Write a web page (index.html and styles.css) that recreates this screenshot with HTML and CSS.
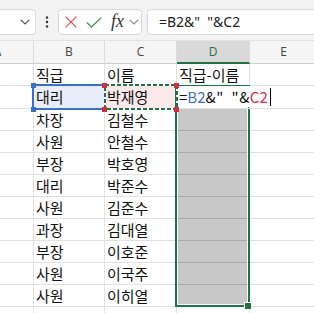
FILE: index.html
```html
<!DOCTYPE html>
<html>
<head>
<meta charset="utf-8">
<link rel="stylesheet" href="styles.css">
</head>
<body>
<div class="toolbar">
  <div class="namebox">
    <svg class="chev" width="10" height="6" viewBox="0 0 10 6"><polyline points="0.8,0.8 5,5 9.2,0.8" fill="none" stroke="#555" stroke-width="1.2"/></svg>
  </div>
  <div class="dots">
    <svg width="4" height="12" viewBox="0 0 4 12"><circle cx="2" cy="1.5" r="1.2" fill="#333"/><circle cx="2" cy="6" r="1.2" fill="#333"/><circle cx="2" cy="10.5" r="1.2" fill="#333"/></svg>
  </div>
  <div class="fxbox">
    <svg class="ico-x" width="12" height="12" viewBox="0 0 12 12"><path d="M0.6 0.6 L11.4 11.4 M11.4 0.6 L0.6 11.4" stroke="#e0525c" stroke-width="1.3" fill="none"/></svg>
    <svg class="ico-ok" width="16" height="11" viewBox="0 0 16 11"><polyline points="0.8,5.4 5.4,10 15.2,0.8" fill="none" stroke="#43a05f" stroke-width="1.4"/></svg>
    <span class="fx">fx</span>
    <svg class="chev2" width="10" height="6" viewBox="0 0 10 6"><polyline points="0.8,0.8 5,5 9.2,0.8" fill="none" stroke="#888" stroke-width="1.2"/></svg>
  </div>
  <div class="formula">=B2&amp;"  "&amp;C2</div>
</div>

<div class="sheetwrap">
  <div class="grid">
    <div class="hd hd-a">A</div><div class="hd">B</div><div class="hd">C</div><div class="hd hd-sel">D</div><div class="hd">E</div><div class="hd"></div>

    <div class="c"></div><div class="c">직급</div><div class="c">이름</div><div class="c">직급-이름</div><div class="c"></div><div class="c"></div>

    <div class="c"></div><div class="c ref-b">대리</div><div class="c ref-c">박재영</div>
    <div class="c edit"><span class="edtext">=<span class="blue">B2</span><span class="mid">&amp;"  "&amp;</span><span class="red">C2</span><span class="caret"></span></span></div>
    <div class="c"></div><div class="c"></div>

    <div class="c"></div><div class="c">차장</div><div class="c">김철수</div><div class="c sel"></div><div class="c"></div><div class="c"></div>
    <div class="c"></div><div class="c">사원</div><div class="c">안철수</div><div class="c sel"></div><div class="c"></div><div class="c"></div>
    <div class="c"></div><div class="c">부장</div><div class="c">박호영</div><div class="c sel"></div><div class="c"></div><div class="c"></div>
    <div class="c"></div><div class="c">대리</div><div class="c">박준수</div><div class="c sel"></div><div class="c"></div><div class="c"></div>
    <div class="c"></div><div class="c">사원</div><div class="c">김준수</div><div class="c sel"></div><div class="c"></div><div class="c"></div>
    <div class="c"></div><div class="c">과장</div><div class="c">김대열</div><div class="c sel"></div><div class="c"></div><div class="c"></div>
    <div class="c"></div><div class="c">부장</div><div class="c">이호준</div><div class="c sel"></div><div class="c"></div><div class="c"></div>
    <div class="c"></div><div class="c">사원</div><div class="c">이국주</div><div class="c sel"></div><div class="c"></div><div class="c"></div>
    <div class="c"></div><div class="c">사원</div><div class="c">이히열</div><div class="c sel"></div><div class="c"></div><div class="c"></div>
    <div class="c"></div><div class="c"></div><div class="c"></div><div class="c"></div><div class="c"></div><div class="c"></div>
  </div>

  <div class="selbox"></div>
  <div class="handle"></div>
  <div class="bbox"></div>
  <svg class="cbox" width="74" height="26" viewBox="0 0 74 26">
    <rect x="1" y="1" width="72" height="24" fill="none" stroke="#ffffff" stroke-width="2"/>
    <rect x="1" y="1" width="72" height="24" fill="none" stroke="#217346" stroke-width="2" stroke-dasharray="4 2"/>
  </svg>
  <div class="sq sq-blue sq-b1"></div>
  <div class="sq sq-blue sq-b2"></div>
  <div class="sq sq-red sq-c1"></div>
  <div class="sq sq-red sq-c2"></div>
  <div class="sq sq-red sq-c3"></div>
  <div class="sq sq-red sq-c4"></div>
</div>
</body>
</html>
```

FILE: styles.css
```css
html, body {
  margin: 0;
  padding: 0;
}
body {
  width: 314px;
  height: 313px;
  overflow: hidden;
  background: #ffffff;
  font-family: "Noto Sans CJK KR", "Noto Sans", sans-serif;
}

/* ---------- toolbar ---------- */
.toolbar {
  display: flex;
  align-items: flex-start;
  box-sizing: border-box;
  height: 41px;
  padding-top: 9px;
  background: #f3f3f3;
  border-bottom: 1px solid #e3e3e3;
}
.namebox {
  box-sizing: border-box;
  width: 43px;
  height: 26px;
  margin-left: -7px;
  background: #fff;
  border: 1px solid #d9d9d9;
  border-radius: 4px;
  display: flex;
  align-items: center;
  justify-content: flex-end;
  padding-right: 5px;
}
.dots {
  width: 22px;
  height: 26px;
  display: flex;
  align-items: center;
  justify-content: center;
}
.fxbox {
  box-sizing: border-box;
  width: 84px;
  height: 26px;
  background: #fff;
  border: 1px solid #d9d9d9;
  border-radius: 4px;
  display: flex;
  align-items: center;
  padding-left: 6px;
}
.ico-x { margin-right: 9px; }
.ico-ok { margin-right: 9px; margin-top: 1px; }
.fx {
  font-family: "Liberation Serif", serif;
  font-style: italic;
  font-size: 18px;
  line-height: 20px;
  color: #333;
  margin-right: 5px;
  margin-top: -2px;
}
.formula {
  flex: 1;
  box-sizing: border-box;
  height: 26px;
  margin-left: 5px;
  background: #fff;
  border: 1px solid #d9d9d9;
  border-right: none;
  border-radius: 4px 0 0 4px;
  padding-left: 11px;
  font-family: "Noto Sans", sans-serif;
  font-size: 14px;
  line-height: 23px;
  color: #222;
  white-space: pre;
}

/* ---------- sheet ---------- */
.sheetwrap {
  position: relative;
  height: 272px;
  overflow: hidden;
}
.grid {
  display: grid;
  margin-left: -38px;
  grid-template-columns: 72px 71px 72px 73px 68px 80px;
  grid-template-rows: 23px 22px 23px repeat(10, 22px);
}
.hd {
  box-sizing: border-box;
  background: #f5f5f5;
  border-right: 1px solid #dcdcdc;
  border-bottom: 1px solid #cfcfcf;
  text-align: center;
  font-family: "Open Sans", "Noto Sans", sans-serif;
  font-size: 12px;
  line-height: 22px;
  color: #444;
}
.hd-sel {
  background: #d9d9d9;
  color: #217346;
  border-bottom: 2px solid #217346;
  line-height: 21px;
}
.c {
  box-sizing: border-box;
  border-right: 1px solid #e1e1e1;
  border-bottom: 1px solid #e1e1e1;
  padding-left: 2px;
  font-size: 15px;
  line-height: 21px;
  color: #111;
  white-space: nowrap;
}
.ref-b { background: #e8eef9; }
.ref-c { background: #fbe9e9; }
.sel {
  background: #c8c8c8;
  border-bottom-color: #a9a9a9;
}
.edit {
  position: relative;
  z-index: 3;
}
.edtext {
  display: inline-flex;
  align-items: center;
  background: #fff;
  font-size: 15px;
  line-height: 21px;
  white-space: pre;
  padding-right: 2px;
}
.mid { letter-spacing: 0.5px; }
.blue { color: #3b6fc6; }
.red { color: #d3334a; }
.caret {
  display: inline-block;
  width: 1px;
  height: 18px;
  background: #000;
  margin-left: 2px;
}

/* ---------- overlays ---------- */
.selbox {
  position: absolute;
  left: 175px;
  top: 44px;
  width: 75px;
  height: 222px;
  box-sizing: border-box;
  border: 2px solid #217346;
  box-shadow: inset 0 0 0 1px #ffffff;
  z-index: 1;
}
.handle {
  position: absolute;
  left: 244px;
  top: 261px;
  width: 6px;
  height: 6px;
  background: #217346;
  border: 1px solid #ffffff;
  z-index: 2;
}
.bbox {
  position: absolute;
  left: 32px;
  top: 43px;
  width: 74px;
  height: 26px;
  box-sizing: border-box;
  border: 2px solid #3a6fc4;
  z-index: 2;
}
.cbox {
  position: absolute;
  left: 104px;
  top: 43px;
  z-index: 4;
}
.sq {
  position: absolute;
  width: 5px;
  height: 5px;
  z-index: 5;
}
.sq-blue { background: #3a6fc4; }
.sq-red { background: #c9323e; }
.sq-b1 { left: 31px; top: 42px; }
.sq-b2 { left: 31px; top: 66px; }
.sq-c1 { left: 102px; top: 42px; }
.sq-c2 { left: 102px; top: 66px; }
.sq-c3 { left: 174px; top: 42px; }
.sq-c4 { left: 174px; top: 66px; }
```
